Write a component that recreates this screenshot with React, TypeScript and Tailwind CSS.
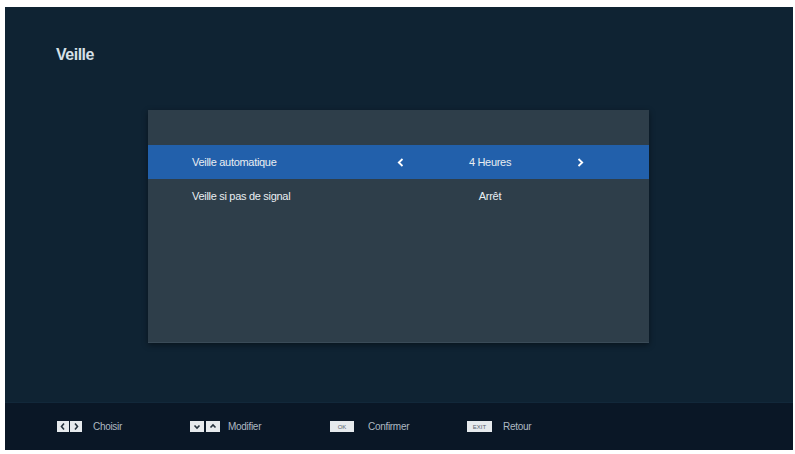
import React from 'react';

const font = { fontFamily: '"Liberation Sans", Arial, sans-serif' };

const Chevron: React.FC<{ dir: 'left' | 'right' }> = ({ dir }) => (
  <svg width="7" height="9" viewBox="0 0 7 9" className="block">
    <polyline
      points={dir === 'left' ? '5.5,1 1.8,4.5 5.5,8' : '1.5,1 5.2,4.5 1.5,8'}
      fill="none"
      stroke="#ffffff"
      strokeWidth="1.8"
    />
  </svg>
);

const KeyArrow: React.FC<{ dir: 'left' | 'right' | 'up' | 'down' }> = ({ dir }) => {
  const pts = {
    left: '5,1.5 2.5,4.5 5,7.5',
    right: '3,1.5 5.5,4.5 3,7.5',
    up: '1.5,5.5 4,3 6.5,5.5',
    down: '1.5,3.5 4,6 6.5,3.5',
  }[dir];
  return (
    <svg width="8" height="9" viewBox="0 0 8 9" className="block">
      <polyline points={pts} fill="none" stroke="#26323d" strokeWidth="1.6" />
    </svg>
  );
};

interface RowProps {
  label: string;
  value: string;
  active?: boolean;
}

const Row: React.FC<RowProps> = ({ label, value, active }) => (
  <div
    className={`h-[34px] grid grid-cols-[198px_20px_160px_20px] items-center pl-[44px] text-[11px] tracking-[-0.3px] text-[#e9eef2] ${
      active ? 'bg-[#2260ab]' : ''
    }`}
  >
    <span>{label}</span>
    <span className="flex justify-center">{active && <Chevron dir="left" />}</span>
    <span className="text-center">{value}</span>
    <span className="flex justify-center">{active && <Chevron dir="right" />}</span>
  </div>
);

export default function App() {
  return (
    <div className="w-[795px] h-[454px] bg-white pt-[7px] pl-[5px] pr-[2px] pb-[4px]" style={font}>
      <div className="w-full h-full flex flex-col bg-[#0f2333]">
        <div className="flex-1 flex flex-col">
          <h1 className="pt-[38px] pl-[51px] text-[16px] leading-[20px] font-semibold tracking-[-0.5px] text-[#d6e0e7]">
            Veille
          </h1>
          <div className="mt-[45px] ml-[143px] w-[501px] h-[233px] pt-[35px] bg-[#2e3e4a] border-b border-[#3a4b58] shadow-[0_2px_6px_rgba(0,0,0,0.45)]">
            <Row label="Veille automatique" value="4 Heures" active />
            <Row label="Veille si pas de signal" value="Arrêt" />
          </div>
        </div>
        <div className="h-[48px] flex items-center pl-[52px] bg-[#0a1726] border-t border-[#12283a] text-[10px] tracking-[-0.3px] text-[#aeb9c2]">
          <div className="w-[133px] flex items-center gap-[11px]">
            <div className="flex gap-[1px]">
              <span className="w-[12px] h-[11px] bg-[#e6eaed] flex items-center justify-center"><KeyArrow dir="left" /></span>
              <span className="w-[12px] h-[11px] bg-[#e6eaed] flex items-center justify-center"><KeyArrow dir="right" /></span>
            </div>
            <span>Choisir</span>
          </div>
          <div className="w-[140px] flex items-center gap-[8px]">
            <div className="flex gap-[2px]">
              <span className="w-[14px] h-[11px] bg-[#e6eaed] flex items-center justify-center"><KeyArrow dir="down" /></span>
              <span className="w-[14px] h-[11px] bg-[#e6eaed] flex items-center justify-center"><KeyArrow dir="up" /></span>
            </div>
            <span>Modifier</span>
          </div>
          <div className="w-[137px] flex items-center gap-[14px]">
            <span className="w-[24px] h-[11px] bg-[#e6eaed] flex items-center justify-center text-[6px] leading-none tracking-normal text-[#58636d]">OK</span>
            <span>Confirmer</span>
          </div>
          <div className="flex items-center gap-[11px]">
            <span className="w-[25px] h-[11px] bg-[#e6eaed] flex items-center justify-center text-[6px] leading-none tracking-normal text-[#58636d]">EXIT</span>
            <span>Retour</span>
          </div>
        </div>
      </div>
    </div>
  );
}
